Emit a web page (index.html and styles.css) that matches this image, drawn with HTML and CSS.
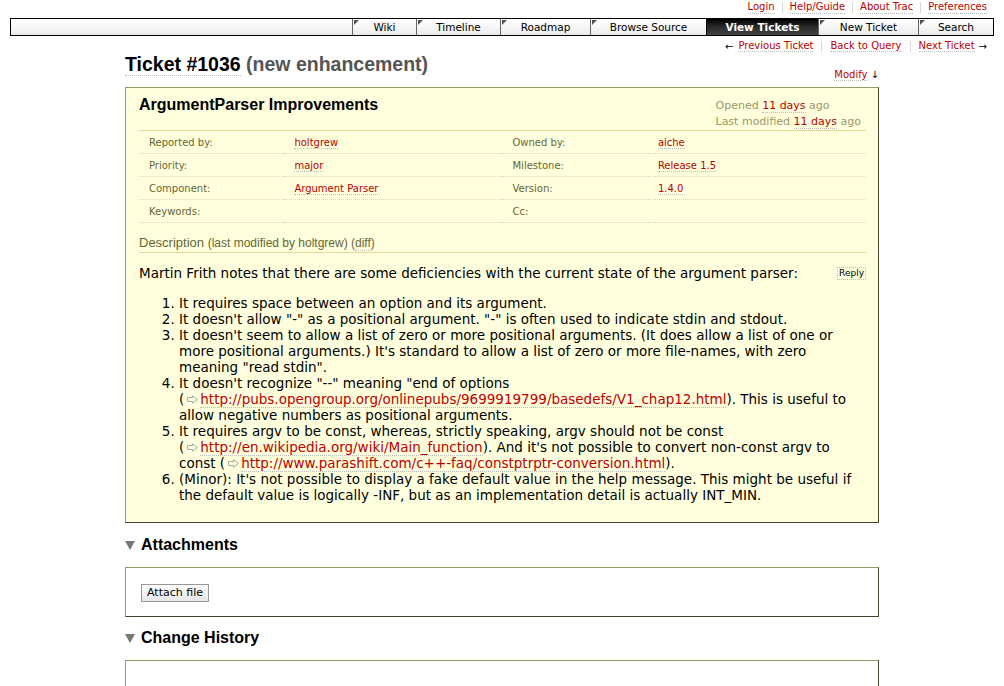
FILE: index.html
```html
<!DOCTYPE html>
<html>
<head>
<meta charset="utf-8">
<link rel="stylesheet" href="styles.css">
</head>
<body>
<div class="metanav">
  <a href="#">Login</a><span class="sep"></span><a href="#">Help/Guide</a><span class="sep"></span><a href="#">About Trac</a><span class="sep"></span><a href="#">Preferences</a>
</div>
<div class="mainnav">
  <a class="tab t1" href="#">Wiki</a>
  <a class="tab t2" href="#">Timeline</a>
  <a class="tab t3" href="#">Roadmap</a>
  <a class="tab t4" href="#">Browse Source</a>
  <a class="tab t5 active" href="#">View Tickets</a>
  <a class="tab t6" href="#">New Ticket</a>
  <a class="tab t7" href="#">Search</a>
</div>
<div class="ctxtnav">
  <span class="arr">←</span><a href="#">Previous Ticket</a><span class="sep"></span><a href="#">Back to Query</a><span class="sep"></span><a href="#">Next Ticket</a><span class="arr">→</span>
</div>
<div class="content">
  <div class="titlerow">
    <h1 class="title"><a href="#" class="tnum">Ticket #1036</a> <span class="status">(new enhancement)</span></h1>
    <div class="modify"><a href="#">Modify</a> <span class="arr">↓</span></div>
  </div>
  <div class="ticket">
    <div class="tophead">
      <h2 class="summary">ArgumentParser Improvements</h2>
      <div class="date">
        <p>Opened <a href="#">11 days</a> ago</p>
        <p>Last modified <a href="#">11 days</a> ago</p>
      </div>
    </div>
    <table class="props">
      <tr><th>Reported by:</th><td><a href="#">holtgrew</a></td><th>Owned by:</th><td><a href="#">aiche</a></td></tr>
      <tr><th>Priority:</th><td><a href="#">major</a></td><th>Milestone:</th><td><a href="#">Release 1.5</a></td></tr>
      <tr><th>Component:</th><td><a href="#">Argument Parser</a></td><th>Version:</th><td><a href="#">1.4.0</a></td></tr>
      <tr><th>Keywords:</th><td></td><th>Cc:</th><td></td></tr>
    </table>
    <h3 class="deschead">Description <span class="small">(last modified by holtgrew) (<a href="#" class="plain">diff</a>)</span></h3>
    <div class="desc">
      <div class="replyrow">
        <p>Martin Frith notes that there are some deficiencies with the current state of the argument parser:</p>
        <button class="reply">Reply</button>
      </div>
      <ol>
        <li>It requires space between an option and its argument.</li>
        <li>It doesn't allow "-" as a positional argument. "-" is often used to indicate stdin and stdout.</li>
        <li>It doesn't seem to allow a list of zero or more positional arguments. (It does allow a list of one or more positional arguments.) It's standard to allow a list of zero or more file-names, with zero meaning "read stdin".</li>
        <li>It doesn't recognize "--" meaning "end of options <span class="nw">(<svg class="ext" width="13" height="9" viewBox="0 0 13 9"><path d="M1.5 2.5H6.5V0.8L11.5 4.5L6.5 8.2V6.5H1.5Z" fill="none" stroke="#aaa" stroke-width="1"/></svg><a href="#">http://pubs.opengroup.org/onlinepubs/9699919799/basedefs/V1_chap12.html</a>).</span> This is useful to allow negative numbers as positional arguments.</li>
        <li>It requires argv to be const, whereas, strictly speaking, argv should not be const <span class="nw">(<svg class="ext" width="13" height="9" viewBox="0 0 13 9"><path d="M1.5 2.5H6.5V0.8L11.5 4.5L6.5 8.2V6.5H1.5Z" fill="none" stroke="#aaa" stroke-width="1"/></svg><a href="#">http://en.wikipedia.org/wiki/Main_function</a>).</span> And it's not possible to convert non-const argv to const <span class="nw">(<svg class="ext" width="13" height="9" viewBox="0 0 13 9"><path d="M1.5 2.5H6.5V0.8L11.5 4.5L6.5 8.2V6.5H1.5Z" fill="none" stroke="#aaa" stroke-width="1"/></svg><a href="#">http://www.parashift.com/c++-faq/constptrptr-conversion.html</a>).</span></li>
        <li>(Minor): It's not possible to display a fake default value in the help message. This might be useful if the default value is logically -INF, but as an implementation detail is actually INT_MIN.</li>
      </ol>
    </div>
  </div>
  <h2 class="fold"><span class="tri"></span>Attachments</h2>
  <div class="box attach">
    <button class="btn">Attach file</button>
  </div>
  <h2 class="fold"><span class="tri"></span>Change History</h2>
  <div class="box history"></div>
</div>
</body>
</html>
```
FILE: styles.css
```css
html, body { margin: 0; padding: 0; background: #fff; }
body {
  font-family: "DejaVu Sans", Verdana, sans-serif;
  font-size: 13.5px;
  color: #000;
}
a { color: #b00; text-decoration: none; border-bottom: 1px dotted #bbb; }

.metanav {
  display: flex;
  justify-content: flex-end;
  align-items: center;
  font-size: 10px;
  height: 12px;
  padding: 1px 17px 0 0;
  line-height: 12px;
}
.metanav .sep, .ctxtnav .sep {
  display: inline-block;
  width: 0;
  height: 11px;
  border-left: 1px solid #d7d7d7;
  margin: 0 7px 0 7px;
}
.ctxtnav .sep { margin: 0 8px; }

.mainnav {
  margin: 5px 10px 0 10px;
  height: 16px;
  border: 1px solid #000;
  display: flex;
  justify-content: flex-end;
  background: linear-gradient(#fff, #f2f2f2 70%, #e8e8e8);
  font-size: 10.5px;
}
.mainnav .tab {
  position: relative;
  box-sizing: border-box;
  display: flex;
  align-items: center;
  justify-content: center;
  white-space: nowrap;
  color: #000;
  border: none;
  border-left: 1px solid #666;
  padding: 0;
  line-height: 16px;
}
.mainnav .tab::before {
  content: "";
  position: absolute;
  left: 1px;
  top: 1px;
  border-top: 5px solid #555;
  border-right: 5px solid transparent;
}
.mainnav .tab.active {
  background: linear-gradient(#000, #2a2a2a 50%, #444);
  color: #fff;
  font-weight: bold;
  border-left-color: #000;
}
.mainnav .tab.active::before { display: none; }
.mainnav .t1 { width: 64px; }
.mainnav .t2 { width: 84px; }
.mainnav .t3 { width: 90px; }
.mainnav .t4 { width: 116px; }
.mainnav .t5 { width: 112px; }
.mainnav .t6 { width: 100px; }
.mainnav .t7 { width: 75px; }

.ctxtnav {
  display: flex;
  justify-content: flex-end;
  align-items: center;
  font-size: 10px;
  height: 14px;
  margin-top: 3px;
  padding-right: 13px;
}
.ctxtnav .arr { color: #000; margin: 0 4px; }
.ctxtnav .arr:first-child { margin-right: 5px; }

.content {
  width: 754px;
  margin: 0 auto;
}
.titlerow {
  display: flex;
  justify-content: space-between;
  align-items: flex-start;
  margin-top: 0;
  height: 28px;
}
.title {
  font-family: "Liberation Sans", Arial, sans-serif;
  font-size: 19.5px;
  font-weight: bold;
  margin: 0;
  line-height: 22px;
}
.title .tnum { color: #000; border-bottom: 1px dotted #bbb; }
.title .status { color: #555; }
.modify {
  font-size: 10px;
  padding-top: 15px;
  line-height: 13px;
}
.modify .arr { color: #000; }

.ticket {
  background: #ffd;
  border: 1px outset #996;
  margin-top: 6px;
  padding: 4px 12px 19px 13px;
}
.tophead {
  display: flex;
  justify-content: space-between;
  align-items: flex-start;
}
.summary {
  font-family: "Liberation Sans", Arial, sans-serif;
  font-size: 16px;
  font-weight: bold;
  margin: 3px 0 0 0;
  line-height: 20px;
}
.date {
  color: #996;
  font-size: 11px;
  text-align: left;
  margin: 6px 5px 0 0;
}
.date p { margin: 0; line-height: 16px; }
.props {
  width: 100%;
  border-collapse: collapse;
  border-top: 1px solid #dd9;
  margin-top: 0;
  font-size: 10px;
}
.props tr { border-bottom: 1px dotted #dd9; }
.props th {
  color: #663;
  font-weight: normal;
  text-align: left;
  width: 20%;
  padding: 6px 10px 4px 10px;
  height: 12px;
  line-height: 12px;
}
.props td { width: 30%; padding: 6px 10px 4px 10px; line-height: 12px; }
.deschead {
  font-family: "Liberation Sans", Arial, sans-serif;
  font-size: 13px;
  font-weight: normal;
  color: #663;
  border-bottom: 1px solid #dd9;
  margin: 12px 0 0 0;
  line-height: 15px;
  padding-bottom: 1px;
}
.deschead .small { font-size: 12px; }
.deschead .plain { color: #663; }
.desc { padding: 0; }
.replyrow {
  display: flex;
  justify-content: space-between;
  align-items: flex-start;
  margin-top: 12px;
}
.replyrow p { margin: 0; line-height: 16px; }
.reply {
  font-family: "DejaVu Sans", Verdana, sans-serif;
  font-size: 9px;
  border: 1px dotted #bbb;
  background: none;
  padding: 0 1px;
  margin: 2px 0 0 0;
  line-height: 11px;
  color: #000;
}
.desc ol {
  margin: 14px 0 0 0;
  padding-left: 40px;
}
.desc li { line-height: 16px; }
.nw { white-space: nowrap; }
.ext { vertical-align: 0; margin: 0 1px 0 2px; }

.fold {
  font-family: "Liberation Sans", Arial, sans-serif;
  font-size: 16px;
  font-weight: bold;
  margin: 12px 0 0 0;
  line-height: 20px;
  display: flex;
  align-items: center;
}
.fold + .box + .fold { margin-top: 11px; }
.tri {
  display: inline-block;
  width: 0; height: 0;
  border-left: 5px solid transparent;
  border-right: 5px solid transparent;
  border-top: 9px solid #777;
  margin-right: 6px;
}
.box {
  border: 1px outset #996;
  margin-top: 12px;
  background: #fff;
}
.attach { padding: 15px 15px 14px 15px; }
.btn {
  font-family: "DejaVu Sans", Verdana, sans-serif;
  font-size: 11px;
  background: linear-gradient(#fff, #e6e6e6);
  border: 1px solid #999;
  padding: 1px 5px;
  line-height: 14px;
  color: #000;
  margin: 0;
}
.history { height: 40px; }
```
